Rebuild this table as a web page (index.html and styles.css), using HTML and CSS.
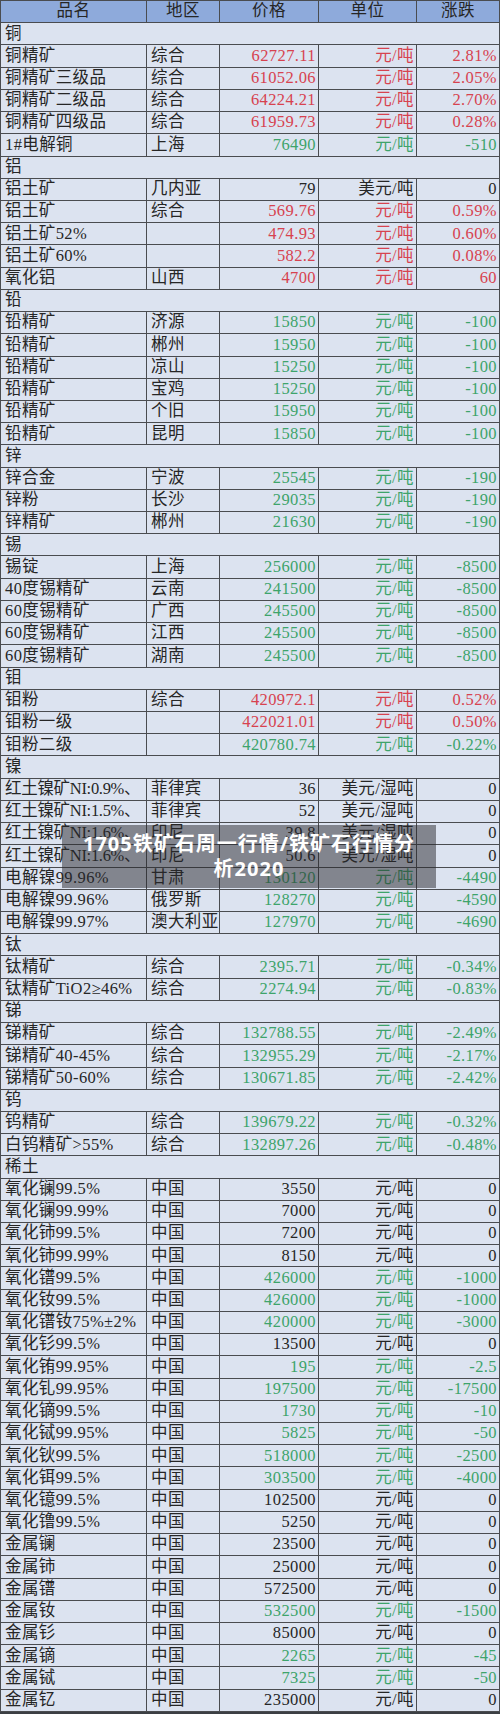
FILE: index.html
```html
<!DOCTYPE html>
<html lang="zh">
<head>
<meta charset="utf-8">
<title>1705铁矿石周一行情</title>
<link rel="stylesheet" href="styles.css">
</head>
<body>
<div class="page">
<div class="sheet">
  <div class="c hd">品名</div><div class="c hd">地区</div><div class="c hd">价格</div><div class="c hd">单位</div><div class="c hd">涨跌</div>

  <div class="sec">铜</div>
  <div class="c">铜精矿</div><div class="c">综合</div><div class="c n r">62727.11</div><div class="c n r">元/吨</div><div class="c n r">2.81%</div>
  <div class="c">铜精矿三级品</div><div class="c">综合</div><div class="c n r">61052.06</div><div class="c n r">元/吨</div><div class="c n r">2.05%</div>
  <div class="c">铜精矿二级品</div><div class="c">综合</div><div class="c n r">64224.21</div><div class="c n r">元/吨</div><div class="c n r">2.70%</div>
  <div class="c">铜精矿四级品</div><div class="c">综合</div><div class="c n r">61959.73</div><div class="c n r">元/吨</div><div class="c n r">0.28%</div>
  <div class="c">1#电解铜</div><div class="c">上海</div><div class="c n g">76490</div><div class="c n g">元/吨</div><div class="c n g">-510</div>

  <div class="sec">铝</div>
  <div class="c">铝土矿</div><div class="c">几内亚</div><div class="c n">79</div><div class="c n">美元/吨</div><div class="c n">0</div>
  <div class="c">铝土矿</div><div class="c">综合</div><div class="c n r">569.76</div><div class="c n r">元/吨</div><div class="c n r">0.59%</div>
  <div class="c">铝土矿52%</div><div class="c"></div><div class="c n r">474.93</div><div class="c n r">元/吨</div><div class="c n r">0.60%</div>
  <div class="c">铝土矿60%</div><div class="c"></div><div class="c n r">582.2</div><div class="c n r">元/吨</div><div class="c n r">0.08%</div>
  <div class="c">氧化铝</div><div class="c">山西</div><div class="c n r">4700</div><div class="c n r">元/吨</div><div class="c n r">60</div>

  <div class="sec">铅</div>
  <div class="c">铅精矿</div><div class="c">济源</div><div class="c n g">15850</div><div class="c n g">元/吨</div><div class="c n g">-100</div>
  <div class="c">铅精矿</div><div class="c">郴州</div><div class="c n g">15950</div><div class="c n g">元/吨</div><div class="c n g">-100</div>
  <div class="c">铅精矿</div><div class="c">凉山</div><div class="c n g">15250</div><div class="c n g">元/吨</div><div class="c n g">-100</div>
  <div class="c">铅精矿</div><div class="c">宝鸡</div><div class="c n g">15250</div><div class="c n g">元/吨</div><div class="c n g">-100</div>
  <div class="c">铅精矿</div><div class="c">个旧</div><div class="c n g">15950</div><div class="c n g">元/吨</div><div class="c n g">-100</div>
  <div class="c">铅精矿</div><div class="c">昆明</div><div class="c n g">15850</div><div class="c n g">元/吨</div><div class="c n g">-100</div>

  <div class="sec">锌</div>
  <div class="c">锌合金</div><div class="c">宁波</div><div class="c n g">25545</div><div class="c n g">元/吨</div><div class="c n g">-190</div>
  <div class="c">锌粉</div><div class="c">长沙</div><div class="c n g">29035</div><div class="c n g">元/吨</div><div class="c n g">-190</div>
  <div class="c">锌精矿</div><div class="c">郴州</div><div class="c n g">21630</div><div class="c n g">元/吨</div><div class="c n g">-190</div>

  <div class="sec">锡</div>
  <div class="c">锡锭</div><div class="c">上海</div><div class="c n g">256000</div><div class="c n g">元/吨</div><div class="c n g">-8500</div>
  <div class="c">40度锡精矿</div><div class="c">云南</div><div class="c n g">241500</div><div class="c n g">元/吨</div><div class="c n g">-8500</div>
  <div class="c">60度锡精矿</div><div class="c">广西</div><div class="c n g">245500</div><div class="c n g">元/吨</div><div class="c n g">-8500</div>
  <div class="c">60度锡精矿</div><div class="c">江西</div><div class="c n g">245500</div><div class="c n g">元/吨</div><div class="c n g">-8500</div>
  <div class="c">60度锡精矿</div><div class="c">湖南</div><div class="c n g">245500</div><div class="c n g">元/吨</div><div class="c n g">-8500</div>

  <div class="sec">钼</div>
  <div class="c">钼粉</div><div class="c">综合</div><div class="c n r">420972.1</div><div class="c n r">元/吨</div><div class="c n r">0.52%</div>
  <div class="c">钼粉一级</div><div class="c"></div><div class="c n r">422021.01</div><div class="c n r">元/吨</div><div class="c n r">0.50%</div>
  <div class="c">钼粉二级</div><div class="c"></div><div class="c n g">420780.74</div><div class="c n g">元/吨</div><div class="c n g">-0.22%</div>

  <div class="sec">镍</div>
  <div class="c fit">红土镍矿NI:0.9%、</div><div class="c">菲律宾</div><div class="c n">36</div><div class="c n">美元/湿吨</div><div class="c n">0</div>
  <div class="c fit">红土镍矿NI:1.5%、</div><div class="c">菲律宾</div><div class="c n">52</div><div class="c n">美元/湿吨</div><div class="c n">0</div>
  <div class="c fit">红土镍矿NI:1.6%、</div><div class="c">印尼</div><div class="c n">39.8</div><div class="c n">美元/湿吨</div><div class="c n">0</div>
  <div class="c fit">红土镍矿NI:1.6%、</div><div class="c">印尼</div><div class="c n">50.6</div><div class="c n">美元/湿吨</div><div class="c n">0</div>
  <div class="c">电解镍99.96%</div><div class="c">甘肃</div><div class="c n g">130120</div><div class="c n g">元/吨</div><div class="c n g">-4490</div>
  <div class="c">电解镍99.96%</div><div class="c">俄罗斯</div><div class="c n g">128270</div><div class="c n g">元/吨</div><div class="c n g">-4590</div>
  <div class="c">电解镍99.97%</div><div class="c">澳大利亚</div><div class="c n g">127970</div><div class="c n g">元/吨</div><div class="c n g">-4690</div>

  <div class="sec">钛</div>
  <div class="c">钛精矿</div><div class="c">综合</div><div class="c n g">2395.71</div><div class="c n g">元/吨</div><div class="c n g">-0.34%</div>
  <div class="c">钛精矿TiO2≥46%</div><div class="c">综合</div><div class="c n g">2274.94</div><div class="c n g">元/吨</div><div class="c n g">-0.83%</div>

  <div class="sec">锑</div>
  <div class="c">锑精矿</div><div class="c">综合</div><div class="c n g">132788.55</div><div class="c n g">元/吨</div><div class="c n g">-2.49%</div>
  <div class="c">锑精矿40-45%</div><div class="c">综合</div><div class="c n g">132955.29</div><div class="c n g">元/吨</div><div class="c n g">-2.17%</div>
  <div class="c">锑精矿50-60%</div><div class="c">综合</div><div class="c n g">130671.85</div><div class="c n g">元/吨</div><div class="c n g">-2.42%</div>

  <div class="sec">钨</div>
  <div class="c">钨精矿</div><div class="c">综合</div><div class="c n g">139679.22</div><div class="c n g">元/吨</div><div class="c n g">-0.32%</div>
  <div class="c">白钨精矿&gt;55%</div><div class="c">综合</div><div class="c n g">132897.26</div><div class="c n g">元/吨</div><div class="c n g">-0.48%</div>

  <div class="sec">稀土</div>
  <div class="c">氧化镧99.5%</div><div class="c">中国</div><div class="c n">3550</div><div class="c n">元/吨</div><div class="c n">0</div>
  <div class="c">氧化镧99.99%</div><div class="c">中国</div><div class="c n">7000</div><div class="c n">元/吨</div><div class="c n">0</div>
  <div class="c">氧化铈99.5%</div><div class="c">中国</div><div class="c n">7200</div><div class="c n">元/吨</div><div class="c n">0</div>
  <div class="c">氧化铈99.99%</div><div class="c">中国</div><div class="c n">8150</div><div class="c n">元/吨</div><div class="c n">0</div>
  <div class="c">氧化镨99.5%</div><div class="c">中国</div><div class="c n g">426000</div><div class="c n g">元/吨</div><div class="c n g">-1000</div>
  <div class="c">氧化钕99.5%</div><div class="c">中国</div><div class="c n g">426000</div><div class="c n g">元/吨</div><div class="c n g">-1000</div>
  <div class="c">氧化镨钕75%±2%</div><div class="c">中国</div><div class="c n g">420000</div><div class="c n g">元/吨</div><div class="c n g">-3000</div>
  <div class="c">氧化钐99.5%</div><div class="c">中国</div><div class="c n">13500</div><div class="c n">元/吨</div><div class="c n">0</div>
  <div class="c">氧化铕99.95%</div><div class="c">中国</div><div class="c n g">195</div><div class="c n g">元/吨</div><div class="c n g">-2.5</div>
  <div class="c">氧化钆99.95%</div><div class="c">中国</div><div class="c n g">197500</div><div class="c n g">元/吨</div><div class="c n g">-17500</div>
  <div class="c">氧化镝99.5%</div><div class="c">中国</div><div class="c n g">1730</div><div class="c n g">元/吨</div><div class="c n g">-10</div>
  <div class="c">氧化铽99.95%</div><div class="c">中国</div><div class="c n g">5825</div><div class="c n g">元/吨</div><div class="c n g">-50</div>
  <div class="c">氧化钬99.5%</div><div class="c">中国</div><div class="c n g">518000</div><div class="c n g">元/吨</div><div class="c n g">-2500</div>
  <div class="c">氧化铒99.5%</div><div class="c">中国</div><div class="c n g">303500</div><div class="c n g">元/吨</div><div class="c n g">-4000</div>
  <div class="c">氧化镱99.5%</div><div class="c">中国</div><div class="c n">102500</div><div class="c n">元/吨</div><div class="c n">0</div>
  <div class="c">氧化镥99.5%</div><div class="c">中国</div><div class="c n">5250</div><div class="c n">元/吨</div><div class="c n">0</div>
  <div class="c">金属镧</div><div class="c">中国</div><div class="c n">23500</div><div class="c n">元/吨</div><div class="c n">0</div>
  <div class="c">金属铈</div><div class="c">中国</div><div class="c n">25000</div><div class="c n">元/吨</div><div class="c n">0</div>
  <div class="c">金属镨</div><div class="c">中国</div><div class="c n">572500</div><div class="c n">元/吨</div><div class="c n">0</div>
  <div class="c">金属钕</div><div class="c">中国</div><div class="c n g">532500</div><div class="c n g">元/吨</div><div class="c n g">-1500</div>
  <div class="c">金属钐</div><div class="c">中国</div><div class="c n">85000</div><div class="c n">元/吨</div><div class="c n">0</div>
  <div class="c">金属镝</div><div class="c">中国</div><div class="c n g">2265</div><div class="c n g">元/吨</div><div class="c n g">-45</div>
  <div class="c">金属铽</div><div class="c">中国</div><div class="c n g">7325</div><div class="c n g">元/吨</div><div class="c n g">-50</div>
  <div class="c">金属钇</div><div class="c">中国</div><div class="c n">235000</div><div class="c n">元/吨</div><div class="c n">0</div>
</div>
<div class="caption">1705铁矿石周一行情/铁矿石行情分析2020</div>
</div>
</body>
</html>
```

FILE: styles.css
```css
html, body {
  margin: 0;
  padding: 0;
}
body {
  width: 500px;
  height: 1714px;
  background: #3c3f44;
  overflow: hidden;
}
.page {
  position: relative;
  width: 500px;
}
.sheet {
  display: grid;
  grid-template-columns: 146px 73px 99px 98px 83px;
  grid-auto-rows: 22.22px;
  background: #dce3f0;
  border-top: 1px solid #4a4c50;
  border-left: 1px solid #4a4c50;
  font-family: "Liberation Serif", "Noto Sans CJK SC", serif;
  font-size: 16.5px;
  letter-spacing: 0.4px;
  color: #262626;
}
.c {
  box-sizing: border-box;
  border-right: 1px solid #4a4c50;
  border-bottom: 1px solid #4a4c50;
  padding: 0 3px 0 4px;
  display: flex;
  align-items: center;
  white-space: nowrap;
  overflow: hidden;
  line-height: 1;
}
.fit {
  letter-spacing: -0.3px;
  padding-right: 0;
}
.hd {
  background: #8eaadb;
  justify-content: center;
  padding: 0;
}
.sec {
  grid-column: 1 / -1;
  box-sizing: border-box;
  border-right: 1px solid #4a4c50;
  border-bottom: 1px solid #4a4c50;
  padding: 0 4px;
  display: flex;
  align-items: center;
  line-height: 1;
}
.n {
  justify-content: flex-end;
  padding-right: 2px;
}
.r {
  color: #d7424f;
}
.g {
  color: #3ea46b;
}
.caption {
  position: absolute;
  left: 62px;
  top: 825px;
  width: 374px;
  height: 63px;
  box-sizing: border-box;
  padding: 6px 20px;
  background: rgba(40, 40, 44, 0.5);
  color: #ffffff;
  font-family: "Noto Sans", "Noto Sans CJK SC", sans-serif;
  font-weight: 700;
  font-size: 20px;
  line-height: 25px;
  letter-spacing: 1px;
  text-align: center;
}
```
